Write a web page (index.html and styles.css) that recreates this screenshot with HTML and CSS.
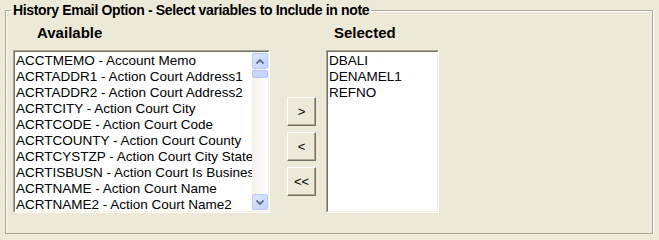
FILE: index.html
```html
<!DOCTYPE html>
<html lang="en">
<head>
    <meta charset="UTF-8">
    <title>History Email Option</title>
    <link rel="stylesheet" href="styles.css">
</head>
<body>
<fieldset class="panel">
    <legend>History Email Option - Select variables to Include in note</legend>
    <div class="cols">
        <div class="col col-avail">
            <div class="heading">Available</div>
            <div class="listbox">
                <div class="listbox-in">
                    <ul class="items">
                        <li>ACCTMEMO - Account Memo</li>
                        <li>ACRTADDR1 - Action Court Address1</li>
                        <li>ACRTADDR2 - Action Court Address2</li>
                        <li>ACRTCITY - Action Court City</li>
                        <li>ACRTCODE - Action Court Code</li>
                        <li>ACRTCOUNTY - Action Court County</li>
                        <li>ACRTCYSTZP - Action Court City State</li>
                        <li>ACRTISBUSN - Action Court Is Business</li>
                        <li>ACRTNAME - Action Court Name</li>
                        <li>ACRTNAME2 - Action Court Name2</li>
                    </ul>
                    <div class="scrollbar">
                        <div class="sb-btn">
                            <svg width="8" height="5" viewBox="0 0 8 5"><path d="M0.5 4.5 L4 1 L7.5 4.5" fill="none" stroke="#4d6185" stroke-width="1.6"/></svg>
                        </div>
                        <div class="sb-thumb"></div>
                        <div class="sb-track"></div>
                        <div class="sb-btn">
                            <svg width="8" height="5" viewBox="0 0 8 5"><path d="M0.5 0.5 L4 4 L7.5 0.5" fill="none" stroke="#4d6185" stroke-width="1.6"/></svg>
                        </div>
                    </div>
                </div>
            </div>
        </div>
        <div class="col col-btns">
            <button class="move">&gt;</button>
            <button class="move">&lt;</button>
            <button class="move">&lt;&lt;</button>
        </div>
        <div class="col col-sel">
            <div class="heading">Selected</div>
            <div class="listbox">
                <div class="listbox-in">
                    <ul class="items">
                        <li>DBALI</li>
                        <li>DENAMEL1</li>
                        <li>REFNO</li>
                    </ul>
                </div>
            </div>
        </div>
    </div>
</fieldset>
</body>
</html>
```

FILE: styles.css
```css
html {
    background: #ece9d8;
}
body {
    margin: 0;
    padding: 2px 0 0 5px;
    font: 13.5px/16px "Liberation Sans", Arial, sans-serif;
    color: #000;
}
ul {
    margin: 0;
    padding: 0;
    list-style: none;
}
.panel {
    box-sizing: border-box;
    width: 648px;
    height: 232px;
    margin: 0;
    padding: 7px 0 0 7px;
    border: 1px solid #aca899;
    box-shadow: inset 1px 1px #fff, 1px 1px #fff;
}
.panel legend {
    margin-left: -2px;
    padding: 0 2px;
    font-size: 14px;
    font-weight: bold;
    letter-spacing: -0.35px;
    line-height: 16px;
}
.cols {
    display: flex;
    align-items: flex-start;
}
.heading {
    font-size: 15px;
    font-weight: bold;
    line-height: 16px;
    margin-bottom: 9px;
}
.col-avail {
    width: 257px;
}
.col-avail .heading {
    padding-left: 24px;
}
.col-sel {
    width: 113px;
    margin-left: 10px;
}
.col-sel .heading {
    padding-left: 8px;
}
.listbox {
    box-sizing: border-box;
    height: 163px;
    border: 1px solid;
    border-color: #aca899 #fff #fff #aca899;
}
.listbox-in {
    display: flex;
    height: 100%;
    box-sizing: border-box;
    border: 1px solid;
    border-color: #716f64 #f1efe2 #f1efe2 #716f64;
    background: #fff;
}
.items {
    flex: 1;
    overflow: hidden;
    padding: 1px 0 0 1px;
    white-space: nowrap;
}
.items li {
    height: 16px;
}
.scrollbar {
    flex: none;
    width: 16px;
    display: flex;
    flex-direction: column;
    padding: 1px 0;
    background: linear-gradient(to right, #f3f1ec, #fefefb);
}
.sb-btn {
    box-sizing: border-box;
    height: 16px;
    display: flex;
    align-items: center;
    justify-content: center;
    border: 1px solid #b9c9f1;
    border-radius: 2px;
    background: linear-gradient(135deg, #dde7fd, #c1d3fb);
}
.sb-thumb {
    box-sizing: border-box;
    height: 8px;
    margin-top: 1px;
    border: 1px solid #b3c6f4;
    border-radius: 2px;
    background: #c8d6fb;
}
.sb-track {
    flex: 1;
}
.col-btns {
    display: flex;
    flex-direction: column;
    gap: 6px;
    margin-left: 17px;
    padding-top: 72px;
}
.move {
    box-sizing: border-box;
    width: 29px;
    height: 29px;
    padding: 0;
    font: 13px "Liberation Sans", Arial, sans-serif;
    color: #000;
    background: #ece9d8;
    border: 1px solid;
    border-color: #fff #716f64 #716f64 #fff;
    box-shadow: inset -1px -1px #aca899;
}
```
